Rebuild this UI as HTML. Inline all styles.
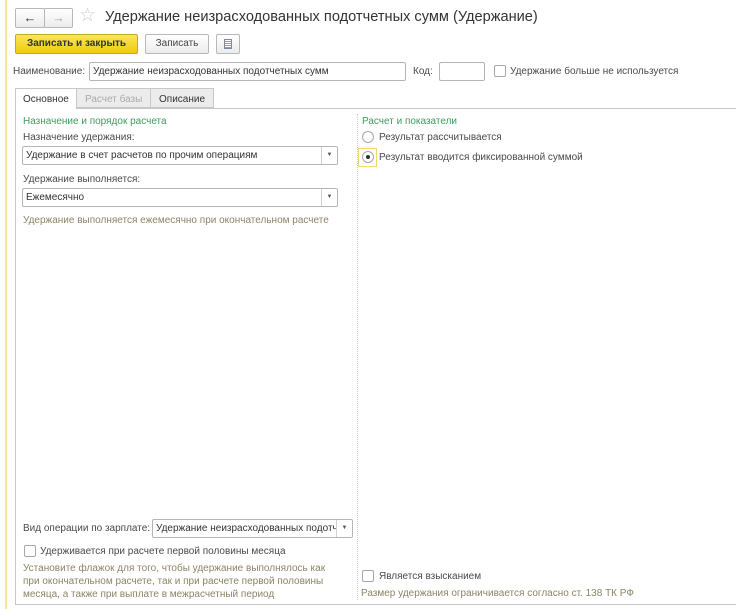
<!DOCTYPE html>
<html><head><meta charset="utf-8"><style>
*{box-sizing:border-box;margin:0;padding:0}
body{width:736px;height:609px;background:#fff;font-family:"Liberation Sans",sans-serif;font-size:10px;color:#4a4a4a;position:relative;overflow:hidden}
.a{position:absolute;white-space:nowrap}
.btn{position:absolute;border:1px solid #b8b8b8;border-radius:2px;background:linear-gradient(#fff,#ececec);text-align:center}
.inp{position:absolute;border:1px solid #b5b5b5;border-radius:2px;background:#fff;padding:3px 0 0 3px;color:#333;overflow:hidden;white-space:nowrap}
.dd{position:absolute;right:0;top:0;bottom:0;width:16px;border-left:1px solid #d0d0d0;background:#fff;text-align:center;font-size:6px;line-height:17px;color:#555}
.g{color:#3e9c5e}
.h{color:#8c8466}
.cb{position:absolute;width:12px;height:12px;border:1px solid #a8a8a8;border-radius:2px;background:#fff}
.rb{position:absolute;width:12px;height:12px;border:1px solid #a8a8a8;border-radius:50%;background:#fff}
</style></head><body>
<div class="a" style="left:5px;top:0;width:2px;height:609px;background:#f3e7a0"></div>
<div class="btn" style="left:15px;top:8px;width:30px;height:20px;font-size:13px;line-height:17px;color:#333">&#8592;</div>
<div class="btn" style="left:44px;top:8px;width:29px;height:20px;font-size:13px;line-height:17px;color:#aaa">&#8594;</div>
<div class="a" style="left:79px;top:4px;font-size:19px;color:#ccc">&#9734;</div>
<div class="a" style="left:105px;top:9px;font-size:14.6px;color:#333">Удержание неизрасходованных подотчетных сумм (Удержание)</div>
<div class="btn" style="left:15px;top:34px;width:123px;height:20px;background:linear-gradient(#fbe55a,#f0cb10);border-color:#c8a820;line-height:18px;font-weight:bold;color:#333">Записать и закрыть</div>
<div class="btn" style="left:145px;top:34px;width:64px;height:20px;line-height:18px;color:#444">Записать</div>
<div class="btn" style="left:216px;top:34px;width:24px;height:20px"><div style="margin:4px auto;width:8px;height:10px;border:1px solid #7a8aa0;background:repeating-linear-gradient(#fff 0 1px,#8aa0bc 1px 2px)"></div></div>
<div class="a" style="left:13px;top:66px">Наименование:</div>
<div class="inp" style="left:89px;top:62px;width:317px;height:19px">Удержание неизрасходованных подотчетных сумм</div>
<div class="a" style="left:413px;top:66px">Код:</div>
<div class="inp" style="left:439px;top:62px;width:46px;height:19px"></div>
<div class="cb" style="left:494px;top:65px"></div>
<div class="a" style="left:510px;top:66px">Удержание больше не используется</div>
<div class="a" style="left:15px;top:108px;width:721px;height:1px;background:#c8c8c8"></div>
<div class="a" style="left:15px;top:108px;width:1px;height:497px;background:#c8c8c8"></div>
<div class="a" style="left:15px;top:604px;width:721px;height:1px;background:#c8c8c8"></div>
<div class="a" style="left:15px;top:88px;width:62px;height:21px;border:1px solid #c8c8c8;border-bottom:none;background:#fff;padding:5px 0 0 7px;color:#333">Основное</div>
<div class="a" style="left:76px;top:88px;width:75px;height:20px;border:1px solid #c8c8c8;background:#ececec;padding:5px 0 0 8px;color:#aaa">Расчет базы</div>
<div class="a" style="left:150px;top:88px;width:64px;height:20px;border:1px solid #c8c8c8;background:#ececec;padding:5px 0 0 8px;color:#333">Описание</div>
<div class="a" style="left:357px;top:114px;height:486px;border-left:1px dotted #ccc"></div>
<div class="a g" style="left:23px;top:116px">Назначение и порядок расчета</div>
<div class="a" style="left:23px;top:132px">Назначение удержания:</div>
<div class="inp" style="left:22px;top:146px;width:316px;height:19px">Удержание в счет расчетов по прочим операциям<div class="dd">&#9660;</div></div>
<div class="a" style="left:23px;top:174px">Удержание выполняется:</div>
<div class="inp" style="left:22px;top:188px;width:316px;height:19px">Ежемесячно<div class="dd">&#9660;</div></div>
<div class="a h" style="left:23px;top:215px">Удержание выполняется ежемесячно при окончательном расчете</div>
<div class="a g" style="left:362px;top:116px">Расчет и показатели</div>
<div class="rb" style="left:362px;top:131px"></div>
<div class="a" style="left:379px;top:132px">Результат рассчитывается</div>
<div class="a" style="left:358px;top:148px;width:19px;height:19px;border:1px solid #efd870"></div>
<div class="rb" style="left:362px;top:151px"><div style="width:4px;height:4px;border-radius:50%;background:#333;margin:3px"></div></div>
<div class="a" style="left:379px;top:152px">Результат вводится фиксированной суммой</div>
<div class="a" style="left:23px;top:523px">Вид операции по зарплате:</div>
<div class="inp" style="left:152px;top:519px;width:201px;height:19px">Удержание неизрасходованных подотч<div class="dd">&#9660;</div></div>
<div class="cb" style="left:24px;top:545px"></div>
<div class="a" style="left:40px;top:546px">Удерживается при расчете первой половины месяца</div>
<div class="a h" style="left:23px;top:562px;line-height:13px">Установите флажок для того, чтобы удержание выполнялось как<br>при окончательном расчете, так и при расчете первой половины<br>месяца, а также при выплате в межрасчетный период</div>
<div class="cb" style="left:362px;top:570px"></div>
<div class="a" style="left:379px;top:571px">Является взысканием</div>
<div class="a h" style="left:361px;top:588px">Размер удержания ограничивается согласно ст. 138 ТК РФ</div>
</body></html>
